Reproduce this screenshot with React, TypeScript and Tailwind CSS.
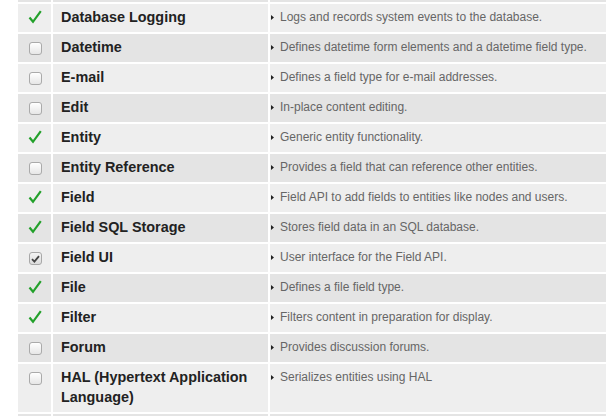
import React from 'react';

type Status = 'enabled' | 'off' | 'locked';

interface ModuleRow {
  name: string;
  status: Status;
  description: string;
}

const modules: ModuleRow[] = [
  { name: 'Database Logging', status: 'enabled', description: 'Logs and records system events to the database.' },
  { name: 'Datetime', status: 'off', description: 'Defines datetime form elements and a datetime field type.' },
  { name: 'E-mail', status: 'off', description: 'Defines a field type for e-mail addresses.' },
  { name: 'Edit', status: 'off', description: 'In-place content editing.' },
  { name: 'Entity', status: 'enabled', description: 'Generic entity functionality.' },
  { name: 'Entity Reference', status: 'off', description: 'Provides a field that can reference other entities.' },
  { name: 'Field', status: 'enabled', description: 'Field API to add fields to entities like nodes and users.' },
  { name: 'Field SQL Storage', status: 'enabled', description: 'Stores field data in an SQL database.' },
  { name: 'Field UI', status: 'locked', description: 'User interface for the Field API.' },
  { name: 'File', status: 'enabled', description: 'Defines a file field type.' },
  { name: 'Filter', status: 'enabled', description: 'Filters content in preparation for display.' },
  { name: 'Forum', status: 'off', description: 'Provides discussion forums.' },
  { name: 'HAL (Hypertext Application Language)', status: 'off', description: 'Serializes entities using HAL' },
];

const GreenCheck = () => (
  <svg width="14" height="14" viewBox="0 0 14 14" className="block">
    <path d="M1.5 7.5 L5 11.8 L12.8 1.2" fill="none" stroke="#22a02a" strokeWidth="2.2" strokeLinejoin="miter" />
  </svg>
);

const StatusCell = ({ status }: { status: Status }) => {
  if (status === 'enabled') {
    return (
      <div className="flex justify-center pt-[6px] pl-[1px]">
        <GreenCheck />
      </div>
    );
  }
  if (status === 'locked') {
    return (
      <div className="flex justify-center pt-[8px] pl-[1px]">
        <div className="flex h-[13px] w-[13px] items-center justify-center rounded-[3px] border border-[#a8a8a8] bg-gradient-to-b from-[#f4f4f4] to-[#dcdcdc]">
          <svg width="9" height="8" viewBox="0 0 9 8">
            <path d="M1 4.2 L3.4 6.6 L8 1.2" fill="none" stroke="#444" strokeWidth="1.8" />
          </svg>
        </div>
      </div>
    );
  }
  return (
    <div className="flex justify-center pt-[8px] pl-[1px]">
      <div className="h-[13px] w-[13px] rounded-[3px] border border-[#aaaaaa] bg-gradient-to-b from-[#ffffff] to-[#e6e6e6]" />
    </div>
  );
};

const Arrow = () => (
  <svg width="3" height="5" viewBox="0 0 3 5" className="mt-[8px] block shrink-0">
    <path d="M0 0 L3 2.5 L0 5 Z" fill="#222" />
  </svg>
);

export default function App() {
  return (
    <div
      className="h-[416px] w-[606px] overflow-hidden bg-white pl-[18px]"
      style={{ fontFamily: '"Liberation Sans", Arial, sans-serif' }}
    >
      <div className="flex w-[700px] flex-col gap-[2px]">
        <div className="grid h-[2px] grid-cols-[33px_215px_1fr] gap-x-[2px]">
          <div className="bg-[#e4e4e4]" />
          <div className="bg-[#e4e4e4]" />
          <div className="bg-[#e4e4e4]" />
        </div>

        {modules.map((m, i) => {
          const bg = i % 2 === 0 ? 'bg-[#eeeeee]' : 'bg-[#e4e4e4]';
          return (
            <div key={m.name} className="grid grid-cols-[33px_215px_1fr] gap-x-[2px]">
              <div className={bg}>
                <StatusCell status={m.status} />
              </div>
              <div className={`${bg} pt-[3px] pb-[5px] pl-[8px] pr-[10px] text-[14.4px] font-bold leading-[20px] text-[#222]`}>
                {m.name}
              </div>
              <div className={`${bg} flex items-start pt-[3px] pb-[5px] pl-[1px]`}>
                <Arrow />
                <span className="ml-[6px] text-[12px] leading-[20px] text-[#666]">{m.description}</span>
              </div>
            </div>
          );
        })}

        <div className="grid h-[4px] grid-cols-[33px_215px_1fr] gap-x-[2px]">
          <div className="bg-[#e4e4e4]" />
          <div className="bg-[#e4e4e4]" />
          <div className="bg-[#e4e4e4]" />
        </div>
      </div>
    </div>
  );
}
